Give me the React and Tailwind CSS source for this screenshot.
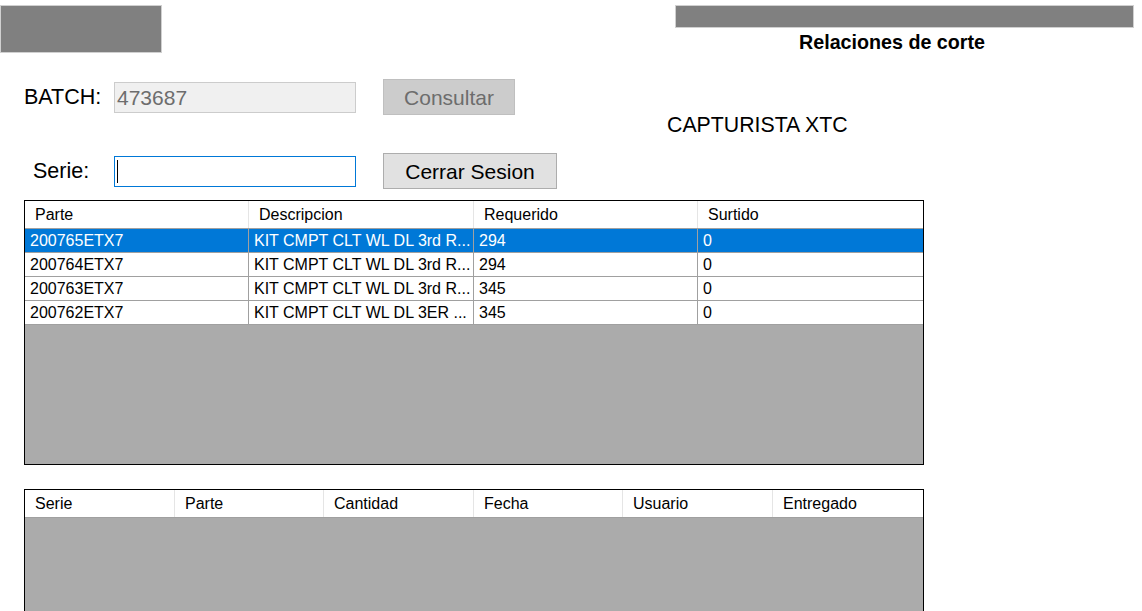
import React from "react";

const rows1 = [
  ["200765ETX7", "KIT CMPT CLT WL DL 3rd R...", "294", "0"],
  ["200764ETX7", "KIT CMPT CLT WL DL 3rd R...", "294", "0"],
  ["200763ETX7", "KIT CMPT CLT WL DL 3rd R...", "345", "0"],
  ["200762ETX7", "KIT CMPT CLT WL DL 3ER ...", "345", "0"],
];

export default function App() {
  return (
    <div
      className="w-[1142px] h-[611px] overflow-hidden bg-white text-black"
      style={{ fontFamily: '"Liberation Sans", Arial, sans-serif' }}
    >
      {/* top bar */}
      <div className="flex justify-between items-start h-[53px]">
        <div className="mt-[5px] w-[162px] h-[48px] bg-[#808080] border border-[#d0d0d0]" />
        <div className="mt-[5px] mr-[8px] w-[459px] flex flex-col">
          <div className="h-[23px] bg-[#808080] border border-[#d0d0d0]" />
          <div className="pl-[124px] mt-[3px] text-[19.7px] font-bold leading-[22px] whitespace-nowrap">
            Relaciones de corte
          </div>
        </div>
      </div>

      {/* form */}
      <div className="flex mt-[26px]">
        <div className="flex flex-col ml-[24px]">
          <div className="flex items-center h-[36px]">
            <div className="w-[90px] pt-[2px] text-[21.5px] leading-none">BATCH:</div>
            <div className="w-[242px] h-[31px] bg-[#f0f0f0] border border-[#cccccc] flex items-center pl-[2px] text-[21px] text-[#6d6d6d] leading-none">
              473687
            </div>
            <div className="ml-[27px] w-[132px] h-[36px] bg-[#cccccc] border border-[#bfbfbf] flex items-center justify-center text-[21px] text-[#6d6d6d] leading-none">
              Consultar
            </div>
          </div>
          <div className="flex items-center h-[36px] mt-[38px]">
            <div className="w-[90px] pl-[9px] pt-[1px] text-[21.5px] leading-none">Serie:</div>
            <div className="w-[242px] h-[31px] bg-white border border-[#0078d7] flex items-center pl-[2px]">
              <div className="w-px h-[23px] bg-black" />
            </div>
            <div className="ml-[27px] w-[174px] h-[36px] bg-[#e1e1e1] border border-[#adadad] flex items-center justify-center text-[21px] leading-none">
              Cerrar Sesion
            </div>
          </div>
        </div>
        <div className="ml-[110px] pt-[34px] text-[21.3px] leading-[24px] whitespace-nowrap">
          CAPTURISTA XTC
        </div>
      </div>

      {/* table 1 */}
      <div className="ml-[24px] mt-[11px] w-[900px] h-[265px] border border-black bg-[#ababab] text-[16px] flex flex-col">
        <div className="grid grid-cols-[224px_225px_224px_225px] h-[27px] bg-white">
          {["Parte", "Descripcion", "Requerido", "Surtido"].map((h, i) => (
            <div
              key={h}
              className={`flex items-center pl-[10px] pt-[1px] ${i < 3 ? "border-r border-[#e5e5e5]" : ""}`}
            >
              {h}
            </div>
          ))}
        </div>
        {rows1.map((r, ri) => (
          <div
            key={ri}
            className={`grid grid-cols-[224px_225px_224px_225px] h-[24px] border-t border-[#a0a0a0] ${
              ri === 0 ? "bg-[#0078d7] text-white" : "bg-white"
            }`}
          >
            {r.map((c, ci) => (
              <div
                key={ci}
                className={`flex items-center pl-[5px] pt-[1px] whitespace-nowrap overflow-hidden ${
                  ci < 3 ? "border-r border-[#a0a0a0]" : ""
                }`}
              >
                {c}
              </div>
            ))}
          </div>
        ))}
        <div className="border-t border-[#a0a0a0]" />
      </div>

      {/* table 2 */}
      <div className="ml-[24px] mt-[24px] w-[900px] h-[265px] border border-black bg-[#ababab] text-[16px]">
        <div className="grid grid-cols-[150px_149px_150px_149px_150px_150px] h-[28px] bg-white border-b border-[#a0a0a0]">
          {["Serie", "Parte", "Cantidad", "Fecha", "Usuario", "Entregado"].map((h, i) => (
            <div
              key={h}
              className={`flex items-center pl-[10px] pt-[1px] ${i < 5 ? "border-r border-[#e5e5e5]" : ""}`}
            >
              {h}
            </div>
          ))}
        </div>
      </div>
    </div>
  );
}
